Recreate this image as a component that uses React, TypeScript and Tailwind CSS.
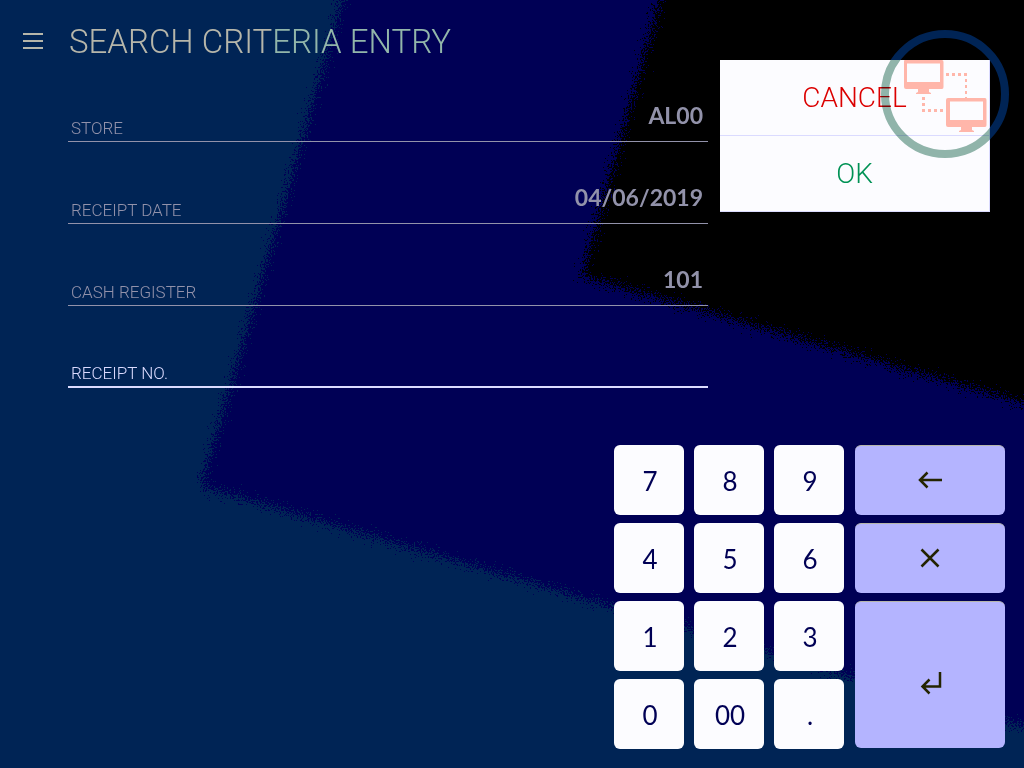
type FieldProps = {
  id: string;
  label: string;
  value?: string;
  active?: boolean;
};

function Field({ id, label, value = "", active = false }: FieldProps) {
  return (
    <div
      className={
        active
          ? "flex h-[82px] items-end border-b-2 border-[#dbdbff] pl-[3px] pr-[5px] text-[#dbdbff]"
          : "flex h-[82px] items-end border-b border-[#9292aa] pl-[3px] pr-[5px] text-[#9292aa]"
      }
    >
      <label htmlFor={id} className="shrink-0 pb-px text-[17px] leading-6 font-light">
        {label}
      </label>
      <input
        id={id}
        type="text"
        defaultValue={value}
        className="mb-3 h-7 min-w-0 flex-1 bg-transparent text-right font-[Lato,sans-serif] text-[23px] font-bold outline-none"
      />
    </div>
  );
}

function Backdrop() {
  return (
    <svg
      aria-hidden="true"
      className="pointer-events-none absolute inset-0 -z-10 h-full w-full"
      viewBox="0 0 1024 768"
      preserveAspectRatio="xMinYMin slice"
    >
      <defs>
        <filter
          id="scatter"
          filterUnits="userSpaceOnUse"
          x="-40"
          y="-40"
          width="1104"
          height="848"
          colorInterpolationFilters="sRGB"
        >
          <feTurbulence type="fractalNoise" baseFrequency="0.7" numOctaves="2" seed="4" result="noise" />
          <feDisplacementMap
            in="SourceGraphic"
            in2="noise"
            scale="38"
            xChannelSelector="R"
            yChannelSelector="G"
          />
        </filter>
      </defs>
      <g filter="url(#scatter)" shapeRendering="crispEdges">
        <path d="M354 -40 L201 486 L1064 739 V-40 Z" fill="#000055" />
        <path d="M671 -40 L582 276 L1064 415 V-40 Z" fill="#000000" />
      </g>
    </svg>
  );
}

function NetworkBadge() {
  return (
    <svg
      aria-hidden="true"
      className="pointer-events-none absolute -top-[30px] left-[161px] h-32 w-32 overflow-visible"
      viewBox="0 0 128 128"
      fill="none"
    >
      <defs>
        <clipPath id="over-panel">
          <rect x="0" y="30" width="109" height="98" />
        </clipPath>
        <clipPath id="off-panel">
          <path d="M0 0 H128 V128 H109 V30 H0 Z" />
        </clipPath>
      </defs>
      <circle cx="64" cy="64" r="60" stroke="#002455" strokeWidth="8" clipPath="url(#off-panel)" />
      <circle
        className="mix-blend-multiply"
        cx="64"
        cy="64"
        r="60"
        stroke="#92b6aa"
        strokeWidth="8"
        clipPath="url(#over-panel)"
      />
      <g fill="#ffb6aa" fillRule="evenodd">
        <path d="M24 30 H61 Q62.500 30 62.500 32 V57 Q62.500 59 61 59 H25 Q23 59 23 57 V31 Q23 30 24 30 Z M26 33.500 V52 H59 V33.500 Z" />
        <path d="M37 59 H48 V62 L50 63 V64 H35 V63 L37 62 Z" />
        <path d="M67 68 H104 Q105.500 68 105.500 70 V95 Q105.500 97 104 97 H67 Q65 97 65 95 V70 Q65 68 67 68 Z M69 71.500 V90 H102 V71.500 Z" />
        <path d="M80 97 H91 V100 L93 101 V102 H78 V101 L80 100 Z" />
      </g>
      <g stroke="#ffb6aa" strokeWidth="3" strokeDasharray="3 3">
        <path d="M65 44.5 H87" />
        <path d="M85 43 V68" strokeWidth="2" />
        <path d="M42.5 67 V78" />
        <path d="M41 80.5 H65" />
      </g>
    </svg>
  );
}

const digits = ["7", "8", "9", "4", "5", "6", "1", "2", "3", "0", "00", "."];

const actionKey =
  "flex items-center justify-center rounded-md border-t border-[#b6b6aa] bg-[#b4b4ff] text-[#242400]";

function Keypad() {
  return (
    <div className="mr-[19px] mb-[19px] flex gap-[11px] self-end">
      <div className="grid grid-cols-3 gap-x-2.5 gap-y-2">
        {digits.map((d) => (
          <button
            key={d}
            type="button"
            className="h-[70px] w-[70px] rounded-md bg-[#fcfcff] pt-0.5 pl-0.5 font-[Lato,sans-serif] text-[26px] leading-8 font-normal text-[#000055]"
          >
            {d}
          </button>
        ))}
      </div>
      <div className="flex w-[150px] flex-col gap-2">
        <button type="button" aria-label="Backspace" className={`${actionKey} h-[70px] pb-0.5`}>
          <svg className="h-7 w-7" viewBox="0 0 28 28" fill="none" stroke="currentColor" strokeWidth="2.5">
            <path d="M26 14 H4 M11.5 6.5 L4 14 L11.5 21.5" />
          </svg>
        </button>
        <button type="button" aria-label="Clear" className={`${actionKey} h-[70px] pb-0.5`}>
          <svg className="h-7 w-7" viewBox="0 0 28 28" fill="none" stroke="currentColor" strokeWidth="2.5">
            <path d="M5.5 5.5 L22.5 22.5 M22.5 5.5 L5.5 22.5" />
          </svg>
        </button>
        <button type="button" aria-label="Enter" className={`${actionKey} mb-px flex-1 pt-4`}>
          <svg className="h-7 w-7" viewBox="0 0 28 28" fill="none" stroke="currentColor" strokeWidth="2.5">
            <path d="M24 3 V17.5 H7 M13.5 10.5 L6.5 17.5 L13.5 24.5" />
          </svg>
        </button>
      </div>
    </div>
  );
}

export default function App() {
  return (
    <main className="relative isolate flex min-h-screen flex-col justify-between gap-8 overflow-hidden bg-[#002455] font-[Roboto,sans-serif] font-light">
      <Backdrop />
      <div className="flex items-start gap-3">
        <div className="min-w-0 flex-1">
          <header className="flex h-[60px] items-start gap-[26px] pt-6 pl-[23px]">
            <button type="button" aria-label="Menu" className="mt-[9px] flex w-5 shrink-0 flex-col gap-[5px]">
              <span className="h-0.5 bg-[#b6b6aa]" />
              <span className="h-0.5 bg-[#b6b6aa]" />
              <span className="h-0.5 bg-[#b6b6aa]" />
            </button>
            <h1 className="text-[33px] leading-9 whitespace-nowrap text-[#b6b6aa]">
              SEARCH CRIT<span className="text-[#92b6aa]">ERIA ENTRY</span>
            </h1>
          </header>
          <form className="pl-[68px]">
            <Field id="store" label="STORE" value="AL00" />
            <Field id="receipt-date" label="RECEIPT DATE" value="04/06/2019" />
            <Field id="cash-register" label="CASH REGISTER" value="101" />
            <Field id="receipt-no" label="RECEIPT NO." active />
          </form>
        </div>
        <div className="relative mt-[60px] mr-[34px] flex w-[270px] shrink-0 flex-col border-r border-b border-[#dbdbff] bg-[#fcfcff] text-[28px] leading-8">
          <button type="button" className="h-[76px] border-b border-[#dbdbff] text-[#db0000]">
            CANCEL
          </button>
          <button type="button" className="h-[75px] text-[#009255]">
            OK
          </button>
          <NetworkBadge />
        </div>
      </div>
      <Keypad />
    </main>
  );
}
